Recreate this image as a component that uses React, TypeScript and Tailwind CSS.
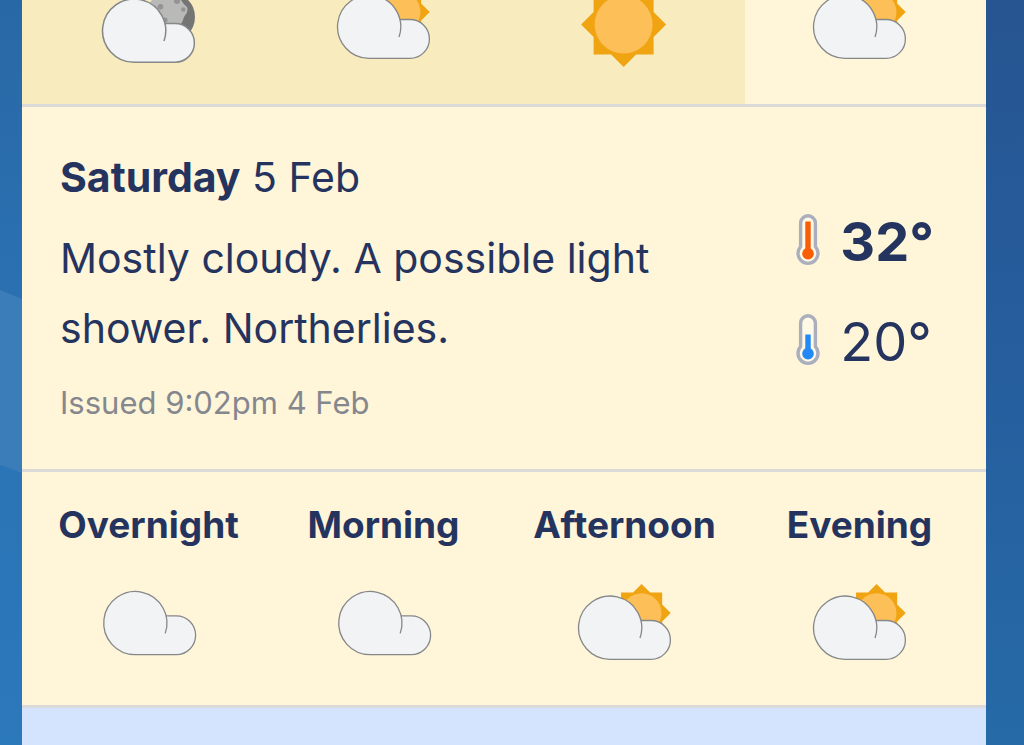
import clsx from "clsx";

type Conditions = "cloudy" | "cloudy-night" | "partly-sunny" | "sunny";

interface Period {
  name: string;
  conditions: Conditions;
}

const today: Period[] = [
  { name: "Overnight", conditions: "cloudy-night" },
  { name: "Morning", conditions: "partly-sunny" },
  { name: "Afternoon", conditions: "sunny" },
  { name: "Evening", conditions: "partly-sunny" },
];

const saturday: Period[] = [
  { name: "Overnight", conditions: "cloudy" },
  { name: "Morning", conditions: "cloudy" },
  { name: "Afternoon", conditions: "partly-sunny" },
  { name: "Evening", conditions: "partly-sunny" },
];

function Cloud({ x = 0, y = 0, strokeWidth = 1.3 }: { x?: number; y?: number; strokeWidth?: number }) {
  return (
    <path
      transform={`translate(${x} ${y})`}
      d="M63 62 A31.6 31.6 0 1 0 33 83.3 H74 A19.4 19.4 0 0 0 74 44.5 H64"
      fill="#f1f3f4"
      stroke="#858789"
      strokeWidth={strokeWidth}
    />
  );
}

// Eight-pointed sun drawn around its own centre, 85 units across
function Sun({ transform }: { transform: string }) {
  return (
    <g transform={transform}>
      <path
        d="M-30 -30 H-12.5 L0 -42.5 L12.5 -30 H30 V-12.5 L42.5 0 L30 12.5 V30 H12.5 L0 42.5 L-12.5 30 H-30 V12.5 L-42.5 0 L-30 -12.5Z"
        fill="#f0a412"
      />
      <circle r="29" fill="#fdbf57" />
    </g>
  );
}

function Moon() {
  return (
    <g>
      <circle cx="69.5" cy="42" r="24.5" fill="#757575" />
      <path
        d="M82 21 A24.5 24.5 0 1 0 72 66 Q78 57 80 49 Q82 46 83 42 Q88 37 86 32 Q83 30 80 25Z"
        fill="#b9b9b8"
      />
      <circle cx="59.5" cy="31.8" r="2.8" fill="#949494" />
      <circle cx="76" cy="26" r="3" fill="#949494" />
      <circle cx="82.3" cy="34.5" r="2.2" fill="#949494" />
      <circle cx="64" cy="45" r="2.6" fill="#949494" />
    </g>
  );
}

function WeatherIcon({ conditions }: { conditions: Conditions }) {
  return (
    <svg viewBox="0 0 96 96" className="mx-auto block size-24" role="img" aria-label={conditions}>
      {conditions === "cloudy" && <Cloud x={1.2} y={-4.6} />}
      {conditions === "cloudy-night" && (
        <>
          <Moon />
          <Cloud y={4} strokeWidth={1.5} />
        </>
      )}
      {conditions === "partly-sunny" && (
        <>
          <Sun transform="translate(64.6 37) scale(0.685)" />
          <Cloud />
        </>
      )}
      {conditions === "sunny" && <Sun transform="translate(46.6 49.5)" />}
    </svg>
  );
}

function Thermometer({ type }: { type: "max" | "min" }) {
  const color = type === "max" ? "#f95d05" : "#2389f7";
  return (
    <svg viewBox="0 0 24 56" className="h-14 w-6" role="img" aria-label={type}>
      <path
        d="M4.6 9.2 A7.4 7.4 0 0 1 19.4 9.2 V32.6 A10 10 0 1 1 4.6 32.6Z"
        fill="#fff9e6"
        stroke="#abafbd"
        strokeWidth="3.4"
      />
      <rect x="9.3" y={type === "max" ? 7.5 : 20.5} width="5.4" height={type === "max" ? 30 : 17} fill={color} />
      <circle cx="12" cy="39.6" r="5.8" fill={color} />
    </svg>
  );
}

function PeriodTable({
  periods,
  showNames = false,
  elapsed = 0,
}: {
  periods: Period[];
  showNames?: boolean;
  elapsed?: number;
}) {
  return (
    <table className="w-full table-fixed border-b-3 border-[#dcd9d9]">
      {showNames && (
        <thead>
          <tr>
            {periods.map((p) => (
              <th key={p.name} className="pt-[29px] pb-[27px] text-[37px] leading-[48px] font-bold first:pl-3 last:pr-3">
                {p.name}
              </th>
            ))}
          </tr>
        </thead>
      )}
      <tbody>
        <tr>
          {periods.map((p, i) => (
            <td key={p.name} className={clsx("p-0 pb-[33px] first:pl-3 last:pr-3", i < elapsed && "bg-[#f8ebbe]")}>
              <WeatherIcon conditions={p.conditions} />
            </td>
          ))}
        </tr>
      </tbody>
    </table>
  );
}

function DaySummary() {
  return (
    <section className="flex items-center justify-between border-b-3 border-[#dcd9d9] py-[46px] pr-[52px] pl-[38px]">
      <div className="max-w-[640px]">
        <h2 className="text-[41px] leading-[48px]">
          <strong className="font-bold">Saturday</strong> 5 Feb
        </h2>
        <p className="mt-[22px] text-[41px] leading-[70px]">
          Mostly cloudy. A possible light shower. Northerlies.
        </p>
        <p className="mt-5 text-[31px] leading-10 text-[#85878f]">Issued 9:02pm 4 Feb</p>
      </div>
      <div className="pt-2 text-[54px] leading-[100px]">
        <div className="flex items-center gap-5">
          <Thermometer type="max" />
          <span className="font-bold">32°</span>
        </div>
        <div className="flex items-center gap-5">
          <Thermometer type="min" />
          <span>20°</span>
        </div>
      </div>
    </section>
  );
}

export default function App() {
  return (
    <div className="flex min-h-screen overflow-hidden font-['Inter',sans-serif] text-[#25345f]">
      <div className="w-[22px] shrink-0 bg-linear-to-b from-[#2968a6] via-[#2b73b5] to-[#2b78ba]">
        <svg viewBox="0 0 22 745" className="block w-full" aria-hidden="true">
          <path d="M0 290 L22 299 V473 L0 465Z" fill="#3a7db9" />
        </svg>
      </div>

      <main className="flex flex-1 flex-col bg-[#fff5d8]">
        {/* Scrolled partly past the top edge */}
        <div className="-mt-[25px]">
          <PeriodTable periods={today} elapsed={3} />
        </div>
        <DaySummary />
        <PeriodTable periods={saturday} showNames />
        <div className="flex-1 bg-[#d4e3fe]" />
      </main>

      <div className="w-[38px] shrink-0 bg-linear-to-b from-[#265591] via-[#265e9e] to-[#266aa8]" />
    </div>
  );
}
